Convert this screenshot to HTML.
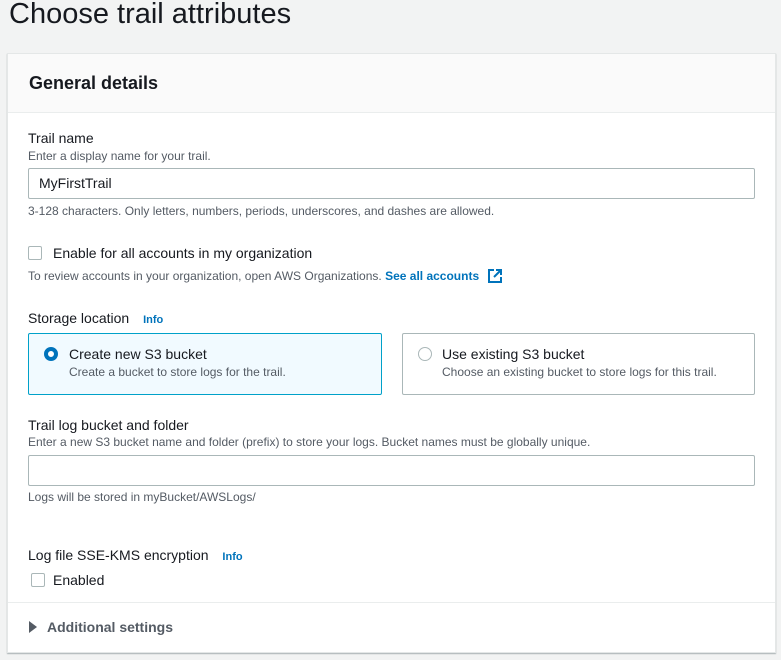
<!DOCTYPE html><html><head><style>
body{margin:0;background:#f2f3f3;font-family:"Liberation Sans",sans-serif;color:#16191f;width:781px;height:660px;overflow:hidden;position:relative}
.a{position:absolute;white-space:nowrap}
h1{position:absolute;left:9px;top:-2px;margin:0;font-weight:400;font-size:29px;color:#16191f}
.card{position:absolute;left:7px;top:53px;width:767px;height:598px;background:#fff;border:1px solid #e4e7e7;box-shadow:0 1px 1px rgba(0,28,36,.3)}
.hd{position:absolute;left:0;top:0;width:767px;height:58px;background:#fafafa;border-bottom:1px solid #eaeded}
.lbl{font-size:14px}
.desc{font-size:12px;color:#545b64}
.inp{position:absolute;left:28px;width:725px;height:29px;border:1px solid #aab7b8;border-radius:2px;background:#fff}
.cb{position:absolute;width:12px;height:12px;border:1px solid #aab7b8;border-radius:2px;background:#fff}
.info{color:#0073bb;font-weight:700;font-size:11px}
</style></head><body>
<h1>Choose trail attributes</h1>
<div class="card"><div class="hd"></div><div style="position:absolute;left:0;top:548px;width:767px;border-top:1px solid #eaeded"></div></div>
<div class="a" style="left:29px;top:73px;font-size:18px;font-weight:700">General details</div>
<div class="a lbl" style="left:28px;top:130px">Trail name</div>
<div class="a desc" style="left:28px;top:149px">Enter a display name for your trail.</div>
<div class="inp" style="top:168px"></div>
<div class="a" style="left:39px;top:175px;font-size:14px">MyFirstTrail</div>
<div class="a desc" style="left:28px;top:204px">3-128 characters. Only letters, numbers, periods, underscores, and dashes are allowed.</div>
<div class="cb" style="left:28px;top:246px"></div>
<div class="a lbl" style="left:53px;top:245px">Enable for all accounts in my organization</div>
<div class="a desc" style="left:28px;top:269px">To review accounts in your organization, open AWS Organizations. <b style="color:#0073bb">See all accounts</b></div>
<svg class="a" style="left:488px;top:269px" width="14" height="14" viewBox="0 0 14 14" fill="none" stroke="#0073bb" stroke-width="2"><path d="M6 1H1v12h12V8M8 1h5v5M13 1L6 8"/></svg>
<div class="a lbl" style="left:28px;top:310px">Storage location <span class="info" style="margin-left:10px">Info</span></div>
<div class="a" style="left:28px;top:333px;width:352px;height:60px;border:1px solid #00a1c9;background:#f1faff;border-radius:2px"></div>
<div class="a" style="left:44px;top:347px;width:6px;height:6px;border:4px solid #0073bb;border-radius:50%;background:#fff"></div>
<div class="a lbl" style="left:69px;top:346px">Create new S3 bucket</div>
<div class="a desc" style="left:69px;top:365px">Create a bucket to store logs for the trail.</div>
<div class="a" style="left:402px;top:333px;width:351px;height:60px;border:1px solid #aab7b8;border-radius:2px"></div>
<div class="a" style="left:418px;top:347px;width:12px;height:12px;border:1px solid #aab7b8;border-radius:50%"></div>
<div class="a lbl" style="left:442px;top:346px">Use existing S3 bucket</div>
<div class="a desc" style="left:442px;top:365px">Choose an existing bucket to store logs for this trail.</div>
<div class="a lbl" style="left:28px;top:417px">Trail log bucket and folder</div>
<div class="a desc" style="left:28px;top:435px">Enter a new S3 bucket name and folder (prefix) to store your logs. Bucket names must be globally unique.</div>
<div class="inp" style="top:455px"></div>
<div class="a desc" style="left:28px;top:490px">Logs will be stored in myBucket/AWSLogs/</div>
<div class="a lbl" style="left:28px;top:547px">Log file SSE-KMS encryption <span class="info" style="margin-left:10px">Info</span></div>
<div class="cb" style="left:31px;top:573px"></div>
<div class="a lbl" style="left:53px;top:572px">Enabled</div>
<svg class="a" style="left:29px;top:621px" width="9" height="12"><path d="M0 0L8 6L0 12Z" fill="#545b64"/></svg>
<div class="a" style="left:47px;top:619px;font-size:14px;font-weight:700;color:#545b64">Additional settings</div>
</body></html>
